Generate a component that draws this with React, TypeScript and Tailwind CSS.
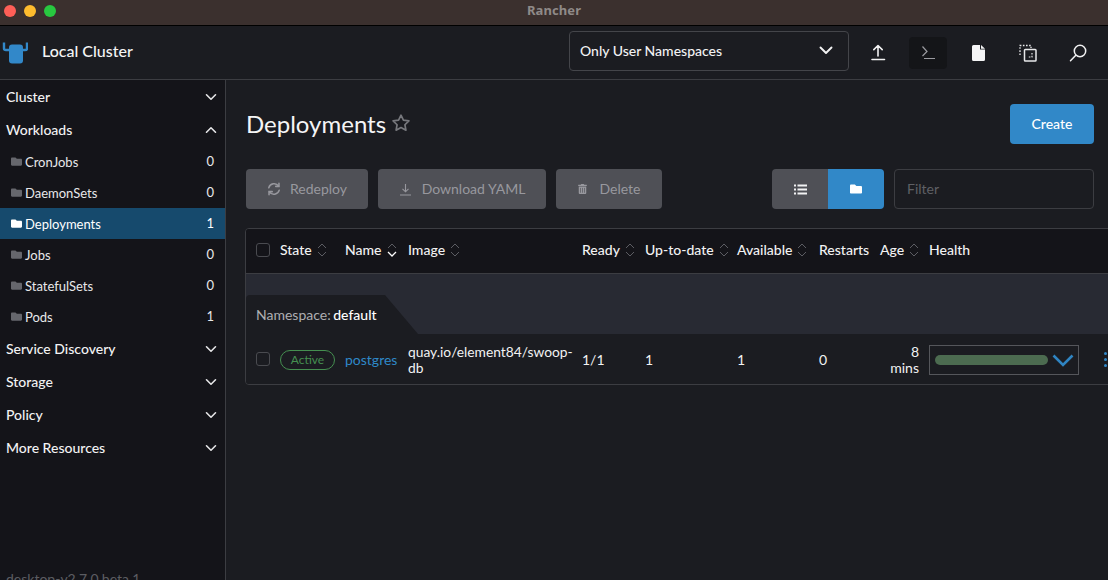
import React from "react";
import { FaFolder, FaTrashAlt } from "react-icons/fa";

const Chev = ({ up = false, className = "" }: { up?: boolean; className?: string }) => (
  <svg width="12" height="8" viewBox="0 0 12 8" fill="none" stroke="currentColor" strokeWidth="1.6" strokeLinecap="round" strokeLinejoin="round" className={className}>
    <path d={up ? "M1.5 6.2 6 1.8l4.5 4.4" : "M1.5 1.8 6 6.2l4.5-4.4"} />
  </svg>
);

const Sort = ({ active = false }: { active?: boolean }) => (
  <svg width="10" height="16" viewBox="0 0 10 16" fill="none" strokeWidth="1" className="shrink-0">
    <path d="M1 6l4-4 4 4" stroke="#5c5d63" />
    <path d="M1 10l4 4 4-4" stroke={active ? "#ffffff" : "#5c5d63"} strokeWidth={active ? 1.3 : 1} />
  </svg>
);

const Group = ({ label, open = false }: { label: string; open?: boolean }) => (
  <div className="h-[33px] shrink-0 flex items-center justify-between pl-[6px] pr-[8px] text-[14px] font-medium text-[#f2f2f3]">
    <span>{label}</span>
    <Chev up={open} className="text-[#e6e6e8]" />
  </div>
);

const Item = ({ label, count, active = false }: { label: string; count: number; active?: boolean }) => (
  <div className={`h-[31px] shrink-0 flex items-center pl-[11px] pr-[11px] text-[13px] ${active ? "bg-[#164a6d] text-white" : "text-[#e8e8ea]"}`}>
    <FaFolder className={`w-[11px] h-[11px] mr-[3px] -mt-[1px] ${active ? "text-white" : "text-[#66676d]"}`} />
    <span className="flex-1 pt-[2px]">{label}</span>
    <span className="text-[13px] pt-[1px]">{count}</span>
  </div>
);

const ActionButton = ({ icon, label, width, gap }: { icon: React.ReactNode; label: string; width: string; gap: string }) => (
  <button className={`${width} ${gap} h-10 rounded bg-[#4f5056] text-[#98989e] text-[14px] flex items-center justify-center`}>
    {icon}
    <span className="pb-[2px]">{label}</span>
  </button>
);

const Head = ({ label, width, sort = true, active = false }: { label: string; width: string; sort?: boolean; active?: boolean }) => (
  <div className={`${width} shrink-0 flex items-center gap-[5px]`}>
    <span className="pb-[1px]">{label}</span>
    {sort && <Sort active={active} />}
  </div>
);

const Checkbox = () => <div className="w-[14px] h-[14px] rounded-[3px] border border-[#4a4b50] shrink-0 ml-[10px] mr-[10px]" />;

export default function App() {
  return (
    <div className="w-[1108px] h-[580px] overflow-hidden flex flex-col bg-[#1b1c21] text-white" style={{ fontFamily: "Lato, 'Noto Sans', sans-serif" }}>
      {/* Title bar */}
      <div className="relative h-[26px] shrink-0 bg-[#3b302e] border-b border-black flex items-center justify-center">
        <div className="absolute left-[4px] top-[5px] flex gap-[8px]">
          <span className="w-3 h-3 rounded-full bg-[#ff5f57]" />
          <span className="w-3 h-3 rounded-full bg-[#febc2e]" />
          <span className="w-3 h-3 rounded-full bg-[#28c840]" />
        </div>
        <span className="text-[13px] font-bold tracking-[0.1px] text-[#8f8a88] pb-[4px]" style={{ fontFamily: "'Noto Sans', sans-serif" }}>Rancher</span>
      </div>

      {/* Header */}
      <div className="h-[54px] shrink-0 border-b border-[#3c3d42] flex items-center bg-[#1b1c21]">
        <svg width="28" height="25" viewBox="0 0 28 25" className="-mt-[1px]" fill="none">
          <rect x="9" y="4.5" width="14" height="19" rx="3" fill="#3288c9" />
          <path d="M4 2.5V8.500Q4 10 6 10H10M27 2.500V8.500Q27 10 25 10H22" stroke="#3288c9" strokeWidth="2.4" />
        </svg>
        <span className="ml-[14px] pb-[3px] text-[16px] font-medium text-[#f4f4f5]">Local Cluster</span>
        <div className="ml-auto flex items-center">
          <div className="w-[280px] h-10 -mt-[4px] rounded border border-[#44454a] flex items-center justify-between pl-[10px] pr-[15px] text-[14px] text-[#f2f2f3] font-medium">
            <span>Only User Namespaces</span>
            <svg width="14" height="9" viewBox="0 0 14 9" fill="none" stroke="#f2f2f3" strokeWidth="1.900" strokeLinecap="round" strokeLinejoin="round">
              <path d="M1.500 1.500 7 7l5.500-5.500" />
            </svg>
          </div>
          <div className="ml-[10px] w-[38px] h-8 flex items-center justify-center">
            <svg width="16" height="17" viewBox="0 0 16 17" fill="none" stroke="#f2f2f3" strokeWidth="1.6" strokeLinecap="round" strokeLinejoin="round">
              <path d="M8 12V1.5M3.8 5.6 8 1.5l4.2 4.1M2 15.5h12.5" />
            </svg>
          </div>
          <div className="ml-[12px] w-[38px] h-8 rounded bg-[#141518] flex items-center justify-center">
            <svg width="15" height="15" viewBox="0 0 15 15" fill="none" stroke="#9a9a9f" strokeWidth="1.2">
              <path d="M1.5 1.5 6 6.5l-4.5 4.5M3 13.5h11" />
            </svg>
          </div>
          <div className="ml-[12px] w-[38px] h-8 flex items-center justify-center">
            <svg width="13" height="16" viewBox="0 0 13 16" fill="#f5f5f6">
              <path d="M1.500 0H8v4.500h5v10a1.500 1.500 0 0 1-1.500 1.500H1.500A1.500 1.500 0 0 1 0 14.500v-13A1.500 1.500 0 0 1 1.500 0zM9 0l4 3.700H9z" />
            </svg>
          </div>
          <div className="ml-[12px] w-[38px] h-8 flex items-center justify-center">
            <svg width="18" height="18" viewBox="0 0 18 18" fill="none" stroke="#e8e8ea">
              <path d="M1 11V1.500h11V4" strokeWidth="1.300" strokeDasharray="1.600 1.500" />
              <rect x="5.500" y="5.500" width="11.500" height="11.500" rx="0.800" strokeWidth="1.500" />
              <path d="M13 9v4H9.500" strokeWidth="1.200" strokeDasharray="1.600 1.200" />
            </svg>
          </div>
          <div className="ml-[12px] mr-[11px] w-[38px] h-8 flex items-center justify-center">
            <svg width="18" height="18" viewBox="0 0 18 18" fill="none" stroke="#f2f2f3" strokeWidth="1.5" strokeLinecap="round">
              <circle cx="11" cy="7" r="5.700" />
              <path d="M6.800 11.300 1.500 16.800" />
            </svg>
          </div>
        </div>
      </div>

      <div className="flex-1 flex min-h-0">
        {/* Sidebar */}
        <div className="w-[226px] shrink-0 bg-[#141419] border-r border-[#3c3d42] flex flex-col overflow-hidden">
          <Group label="Cluster" />
          <Group label="Workloads" open />
          <Item label="CronJobs" count={0} />
          <Item label="DaemonSets" count={0} />
          <Item label="Deployments" count={1} active />
          <Item label="Jobs" count={0} />
          <Item label="StatefulSets" count={0} />
          <Item label="Pods" count={1} />
          <Group label="Service Discovery" />
          <Group label="Storage" />
          <Group label="Policy" />
          <Group label="More Resources" />
          <div className="mt-[105px] shrink-0 pl-[6px] text-[14px] leading-[20px] text-[#5c5d62] whitespace-nowrap">desktop-v2.7.0.beta.1</div>
        </div>

        {/* Main */}
        <div className="flex-1 min-w-0 pl-[20px] pr-[14px] overflow-hidden">
          <div className="flex items-start justify-between pt-[24px]">
            <div className="flex items-center h-10 gap-[5px]">
              <h1 className="text-[24px] font-normal text-[#f5f5f6]">Deployments</h1>
              <svg width="20" height="20" viewBox="0 0 24 24" fill="none" stroke="#77787d" strokeWidth="2" strokeLinejoin="round" className="-mt-[2px]">
                <path d="M12 2.6l2.900 6 6.600.9-4.800 4.600 1.200 6.500L12 17.500l-5.900 3.100 1.200-6.500L2.500 9.500l6.600-.9z" />
              </svg>
            </div>
            <button className="w-[84px] h-10 rounded bg-[#3188c8] text-[14px] font-medium text-white pb-[2px]">Create</button>
          </div>

          <div className="flex items-center mt-[25px]">
            <div className="flex gap-[10px]">
              <ActionButton
                width="w-[122px]"
                gap="gap-[9px]"
                label="Redeploy"
                icon={
                  <svg width="14" height="14" viewBox="0 0 24 24" fill="none" stroke="#98989e" strokeWidth="2.600" strokeLinecap="round">
                    <path d="M3 10a9.500 9.500 0 0 1 17-3M21 14a9.500 9.500 0 0 1-17 3" />
                    <path d="M20.500 2v5.500H15M3.500 22v-5.500H9" />
                  </svg>
                }
              />
              <ActionButton
                width="w-[168px]"
                gap="gap-[10px]"
                label="Download YAML"
                icon={
                  <svg width="13" height="13" viewBox="0 0 13 13" fill="none" stroke="#98989e" strokeWidth="1.100">
                    <path d="M6.500 1v7.500M3.500 5.800 6.500 8.800l3-3M1 12h11" />
                  </svg>
                }
              />
              <ActionButton width="w-[106px]" gap="gap-[13px]" label="Delete" icon={<FaTrashAlt className="w-[9px] h-[10px] text-[#98989e]" />} />
            </div>
            <div className="ml-auto flex items-center">
              <div className="flex w-[112px] h-10 rounded overflow-hidden">
                <div className="w-14 bg-[#4f5056] flex items-center justify-center">
                  <svg width="13" height="11" viewBox="0 0 13 11" fill="#f2f2f3">
                    <rect x="0" y="0.500" width="2" height="2" />
                    <rect x="0" y="4.500" width="2" height="2" />
                    <rect x="0" y="8.500" width="2" height="2" />
                    <rect x="3.500" y="0.500" width="9.500" height="2" />
                    <rect x="3.500" y="4.500" width="9.500" height="2" />
                    <rect x="3.500" y="8.500" width="9.500" height="2" />
                  </svg>
                </div>
                <div className="w-14 bg-[#3188c8] flex items-center justify-center">
                  <FaFolder className="w-[12px] h-[12px] text-white" />
                </div>
              </div>
              <div className="ml-[10px] w-[200px] h-10 rounded border border-[#3c3d42] flex items-center pl-[12px] pb-[2px] text-[14px] text-[#5f6065]">Filter</div>
            </div>
          </div>

          {/* Table */}
          <div className="mt-[19px] -ml-[1px] w-[880px] rounded-[4px] border border-[#3c3d42] overflow-hidden text-[14px]">
            <div className="h-[45px] pb-[2px] bg-[#141419] border-b border-[#3c3d42] flex items-center font-medium text-[#f2f2f3]">
              <Checkbox />
              <Head label="State" width="w-[65px]" />
              <Head label="Name" width="w-[63px]" active />
              <Head label="Image" width="w-[174px]" />
              <Head label="Ready" width="w-[63px]" />
              <Head label="Up-to-date" width="w-[92px]" />
              <Head label="Available" width="w-[82px]" />
              <Head label="Restarts" width="w-[61px]" sort={false} />
              <Head label="Age" width="w-[49px]" />
              <Head label="Health" width="w-[100px]" sort={false} />
            </div>
            <div className="h-[60px] bg-[#282a33] flex flex-col justify-end">
              <div
                className="w-[172px] h-[39px] rounded-tl-[4px] bg-[#1b1c21] flex items-center pl-[10px] text-[#aeaeb2]"
                style={{ clipPath: "polygon(0 0, 139px 0, 100% 100%, 0 100%)" }}
              >
                <span>Namespace:&nbsp;</span>
                <span className="font-medium text-white -ml-[1px]">default</span>
              </div>
            </div>
            <div className="h-[50px] bg-[#1b1c21] flex items-center text-[#f2f2f3]">
              <Checkbox />
              <div className="w-[65px] shrink-0">
                <span className="inline-flex items-center justify-center w-[55px] h-5 pb-[1px] rounded-full border border-[#458f50] text-[12px] text-[#458f50]">Active</span>
              </div>
              <div className="w-[63px] shrink-0 text-[#2f88c8]">postgres</div>
              <div className="w-[174px] shrink-0 leading-[16px] pr-[4px] pt-[2px] text-[13.800px]">quay.io/element84/swoop-db</div>
              <div className="w-[63px] shrink-0">1/1</div>
              <div className="w-[92px] shrink-0">1</div>
              <div className="w-[82px] shrink-0">1</div>
              <div className="w-[61px] shrink-0">0</div>
              <div className="w-[49px] shrink-0 pr-[10px] pt-[2px] text-right leading-[16px]">8 mins</div>
              <div className="w-[150px] h-[30px] mt-[2px] shrink-0 border border-[#55565b] flex items-center pl-[5px]">
                <div className="w-[113px] h-[10px] rounded-full bg-[#4c6b50]" />
                <svg width="22" height="14" viewBox="0 0 22 14" fill="none" stroke="#2f84c2" strokeWidth="2.600" className="ml-[4px]">
                  <path d="M1.500 2.500 11 12l9.500-9.500" />
                </svg>
              </div>
              <div className="ml-[25px] flex flex-col gap-[3px]">
                <span className="w-[3px] h-[3px] rounded-full bg-[#3188c8]" />
                <span className="w-[3px] h-[3px] rounded-full bg-[#3188c8]" />
                <span className="w-[3px] h-[3px] rounded-full bg-[#3188c8]" />
              </div>
            </div>
          </div>
        </div>
      </div>
    </div>
  );
}
